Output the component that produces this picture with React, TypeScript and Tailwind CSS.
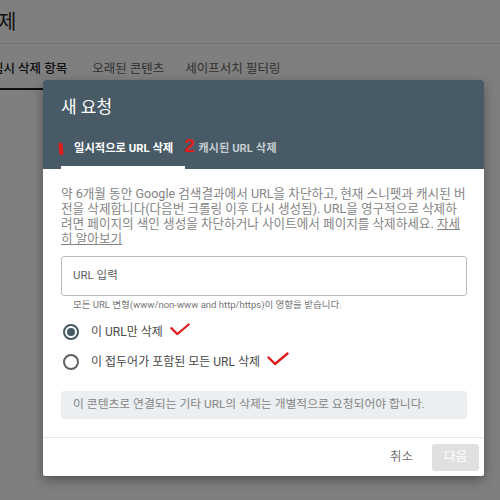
import React from "react";

const font = { fontFamily: 'Roboto, "Noto Sans CJK KR", sans-serif' };

function Check({ className }: { className?: string }) {
    return (
        <svg viewBox="0 0 22 14" className={className} fill="none">
            <path d="M1.5 5.5 L8 12 L20.5 1.5" stroke="#e01b1b" strokeWidth="2.4" strokeLinecap="round" strokeLinejoin="round" />
        </svg>
    );
}

function Radio({ checked }: { checked?: boolean }) {
    return (
        <span className={`flex h-[16px] w-[16px] shrink-0 items-center justify-center rounded-full border-2 ${checked ? "border-[#455a64]" : "border-[#616161]"}`}>
            {checked && <span className="h-[8px] w-[8px] rounded-full bg-[#455a64]" />}
        </span>
    );
}

export default function App() {
    return (
        <div className="relative h-[500px] w-[500px] overflow-hidden bg-white" style={font}>
            {/* page behind the dialog */}
            <div className="flex h-[44px] items-center border-b border-[#e0e0e0]">
                <span className="-ml-[2px] text-[20px] text-[#212121]">제</span>
            </div>
            <div className="flex items-end gap-[21px] pt-[15.5px] text-[12.5px]">
                <div className="-ml-[8px] border-b-2 border-[#212121] pb-[9.5px] pr-[4px] font-medium text-[#212121]">임시 삭제 항목</div>
                <div className="pb-[11.5px] text-[#616161]">오래된 콘텐츠</div>
                <div className="pb-[11.5px] text-[#616161]">세이프서치 필터링</div>
            </div>

            {/* overlay */}
            <div className="absolute inset-0 bg-black/50">
                <div className="absolute left-[43px] top-[80px] flex w-[441px] flex-col overflow-hidden rounded-[2px] bg-white shadow-[0_4px_12px_rgba(0,0,0,0.35)]">
                    <div className="flex flex-col bg-[#475a65] px-[18px]">
                        <div className="pt-[15px] text-[17px] leading-[25.5px] text-white">새 요청</div>
                        <div className="mt-[19px] flex items-end text-[11.3px] font-bold leading-[17px]">
                            <div className="relative flex border-b-[3px] border-white pb-[9px] pl-[13px] pr-[12px] text-white">
                                <span className="absolute left-[-2px] top-[3px] h-[12px] w-[3.5px] rotate-[-6deg] rounded-[1px] bg-[#e01b1b]" />
                                일시적으로 URL 삭제
                            </div>
                            <div className="relative flex pb-[12px] pl-[13px] text-[#c4ccd0]">
                                <span className="absolute left-[-1px] top-[-4px] text-[19px] font-bold leading-none text-[#e01b1b]" style={{ fontFamily: "'Liberation Sans', sans-serif" }}>2</span>
                                캐시된 URL 삭제
                            </div>
                        </div>
                    </div>

                    <div className="flex flex-col pl-[18px] pr-[17px] pt-[17px]">
                        <p className="break-all text-[12.6px] leading-[15px] text-[#858585]">
                            약 6개월 동안 Google 검색결과에서 URL을 차단하고, 현재 스니펫과 캐시된 버전을 삭제합니다(다음번 크롤링 이후 다시 생성됨). URL을 영구적으로 삭제하려면 페이지의 색인 생성을 차단하거나 사이트에서 페이지를 삭제하세요.{" "}
                            <span className="underline">자세히 알아보기</span>
                        </p>
                        <div className="mt-[10.5px] flex h-[40px] items-center rounded-[3px] border border-[#bdbdbd] px-[11px] text-[11.5px] text-[#616161]">
                            URL 입력
                        </div>
                        <div className="mt-[2px] pl-[12px] text-[9.5px] leading-[14px] text-[#757575]">
                            모든 URL 변형(www/non-www and http/https)이 영향을 받습니다.
                        </div>
                        <div className="mt-[9.5px] flex h-[20px] items-center gap-[12.5px] pl-[1.5px] text-[12px] text-[#4a4a4a]">
                            <Radio checked />
                            <span className="flex items-center gap-[7px]">
                                이 URL만 삭제
                                <Check className="-mt-[4px] h-[13px] w-[20px]" />
                            </span>
                        </div>
                        <div className="mt-[10px] flex h-[20px] items-center gap-[12.5px] pl-[1.5px] text-[12px] text-[#4a4a4a]">
                            <Radio />
                            <span className="flex items-center gap-[7px]">
                                이 접두어가 포함된 모든 URL 삭제
                                <Check className="-mt-[5px] h-[14px] w-[22px]" />
                            </span>
                        </div>
                        <div className="mt-[19.5px] flex h-[28px] items-center rounded-[3px] bg-[#eceff1] px-[12px] text-[11.8px] text-[#858585]">
                            이 콘텐츠로 연결되는 기타 URL의 삭제는 개별적으로 요청되어야 합니다.
                        </div>
                    </div>

                    <div className="mt-[18px] flex items-center justify-end gap-[19px] border-t border-[#e6e6e6] pb-[5px] pr-[5px] pt-[6px]">
                        <span className="text-[12.5px] text-[#757575]">취소</span>
                        <span className="flex h-[27px] w-[47px] items-center justify-center rounded-[3px] bg-[#e0e0e0] text-[12.5px] text-white">다음</span>
                    </div>
                </div>
            </div>
        </div>
    );
}
